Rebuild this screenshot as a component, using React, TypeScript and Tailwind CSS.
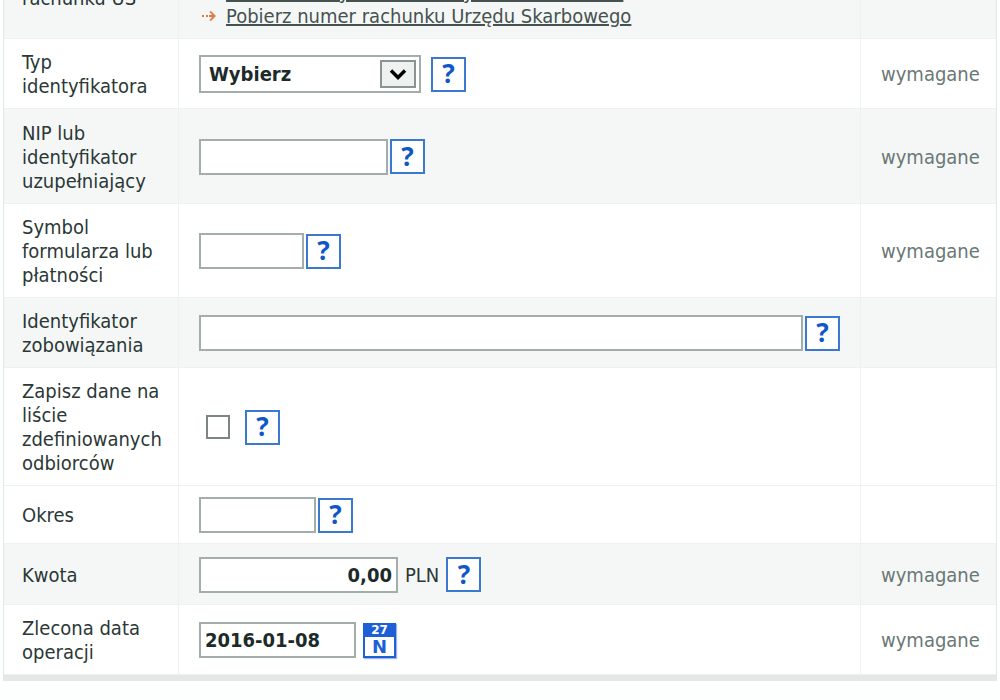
import { ChevronDown } from "lucide-react";
import clsx from "clsx";

interface RowProps {
  label: React.ReactNode;
  htmlFor?: string;
  shaded?: boolean;
  required?: boolean;
  className?: string;
  children: React.ReactNode;
}

const cell = "border-b border-[#edf1f0] pt-[11px] pb-[10px]";
const field =
  "h-9 border-2 border-[#a3adab] bg-white px-1 font-bold text-[#1c2b29]";

function Row({
  label,
  htmlFor,
  shaded,
  required,
  className,
  children,
}: RowProps) {
  return (
    <tr className={clsx(shaded ? "bg-[#f5f7f7]" : "bg-white", className)}>
      <th
        scope="row"
        className={clsx(cell, "border-r pl-[18px] text-left font-normal")}
      >
        <label htmlFor={htmlFor} className="block">
          {label}
        </label>
      </th>
      <td className={clsx(cell, "border-r px-5")}>{children}</td>
      <td className={clsx(cell, "pl-5 text-[#6a7875]")}>
        {required && "wymagane"}
      </td>
    </tr>
  );
}

function HelpButton() {
  return (
    <button
      type="button"
      aria-label="Pomoc"
      className="flex size-[35px] shrink-0 items-center justify-center border-2 border-[#3b78d0] bg-white pb-0.5 font-['Noto_Sans',sans-serif] text-[26px] leading-none font-bold text-[#0f56c6]"
    >
      ?
    </button>
  );
}

function ArrowIcon() {
  return (
    <svg width="14" height="12" viewBox="0 0 14 12" fill="#e07a4e">
      <rect x="0" y="5" width="2" height="2" />
      <rect x="4" y="5" width="2" height="2" />
      <path d="M7 5h3L7.5 2l1.2-1.2L14 6l-5.3 5.2L7.5 10 10 7H7z" />
    </svg>
  );
}

function ListLink({ text }: { text: string }) {
  return (
    <div className="flex items-center gap-2.5 pl-[3px] whitespace-nowrap">
      <ArrowIcon />
      <a href="#" className="text-[#46524f] underline">
        {text}
      </a>
    </div>
  );
}

export default function App() {
  return (
    <div className="h-screen overflow-hidden bg-[#fdfefe] font-['DejaVu_Sans_Condensed','DejaVu_Sans',sans-serif] text-[20px] leading-6 text-[#2b3836]">
      {/* Form is scrolled down, the first row is partly above the fold */}
      <form className="mx-[3px] -mt-[67px] border-x border-[#e3e9e8] shadow-[0_6px_0_#e3e8e7]">
        <table className="w-full table-fixed border-separate border-spacing-0">
          <colgroup>
            <col className="w-[175px]" />
            <col />
            <col className="w-[135px]" />
          </colgroup>
          <tbody>
            <Row
              label={
                <>
                  Numer
                  <br />
                  rachunku US
                </>
              }
              htmlFor="account"
              shaded
            >
              <input id="account" className={clsx(field, "block w-full")} />
              <ListLink text="Pobierz z listy zdefiniowanych odbiorców US" />
              <ListLink text="Pobierz numer rachunku Urzędu Skarbowego" />
            </Row>

            <Row label="Typ identyfikatora" htmlFor="idType" required>
              <div className="flex items-center gap-2.5">
                <div className="relative">
                  <select
                    id="idType"
                    className="h-[38px] w-[222px] appearance-none border-2 border-[#a3adab] bg-white px-2 font-bold text-[#1c2b29]"
                  >
                    <option>Wybierz</option>
                  </select>
                  <span className="pointer-events-none absolute top-[5px] right-[5px] flex h-7 w-9 items-center justify-center border-2 border-[#8a9492] bg-[#edf2f1] text-black">
                    <ChevronDown
                      size={28}
                      strokeWidth={3}
                      strokeLinecap="butt"
                      strokeLinejoin="miter"
                      className="shrink-0"
                    />
                  </span>
                </div>
                <HelpButton />
              </div>
            </Row>

            <Row
              label="NIP lub identyfikator uzupełniający"
              htmlFor="nip"
              shaded
              required
              className="h-[95px]"
            >
              <div className="flex items-center gap-[2px]">
                <input id="nip" className={clsx(field, "w-[189px]")} />
                <HelpButton />
              </div>
            </Row>

            <Row
              label="Symbol formularza lub płatności"
              htmlFor="symbol"
              required
            >
              <div className="flex items-center gap-[2px]">
                <input id="symbol" className={clsx(field, "w-[105px]")} />
                <HelpButton />
              </div>
            </Row>

            <Row
              label="Identyfikator zobowiązania"
              htmlFor="obligation"
              shaded
            >
              <div className="flex items-center gap-[2px]">
                <input
                  id="obligation"
                  className={clsx(field, "min-w-0 flex-1")}
                />
                <HelpButton />
              </div>
            </Row>

            <Row
              label="Zapisz dane na liście zdefiniowanych odbiorców"
              htmlFor="save"
            >
              <div className="flex items-center gap-[15px] pl-[7px]">
                <input
                  id="save"
                  type="checkbox"
                  className="size-6 appearance-none border-2 border-[#7b8583] bg-white"
                />
                <HelpButton />
              </div>
            </Row>

            <Row label="Okres" htmlFor="period">
              <div className="flex items-center gap-[2px]">
                <input id="period" className={clsx(field, "w-[117px]")} />
                <HelpButton />
              </div>
            </Row>

            <Row
              label="Kwota"
              htmlFor="amount"
              shaded
              required
              className="h-[61px]"
            >
              <div className="flex items-center gap-[7px]">
                <input
                  id="amount"
                  defaultValue="0,00"
                  className={clsx(field, "w-[199px] text-right")}
                />
                <span>PLN</span>
                <HelpButton />
              </div>
            </Row>

            <Row label="Zlecona data operacji" htmlFor="date" required>
              <div className="flex items-center gap-[7px]">
                <input
                  id="date"
                  defaultValue="2016-01-08"
                  className={clsx(field, "w-[157px]")}
                />
                <button
                  type="button"
                  className="flex h-[35px] w-[33px] flex-col border-2 border-t-0 border-[#1f5fd6] bg-white text-center shadow-[1px_1px_1px_#9db8e8]"
                >
                  <span className="block w-full bg-[#1f5fd6] font-['DejaVu_Sans',sans-serif] text-[12px] leading-[14px] font-bold text-white">
                    27
                  </span>
                  <span className="block w-full font-['DejaVu_Sans',sans-serif] text-[18px] leading-[19px] font-bold text-[#1f5fd6]">
                    N
                  </span>
                </button>
              </div>
            </Row>
          </tbody>
        </table>
      </form>
    </div>
  );
}
